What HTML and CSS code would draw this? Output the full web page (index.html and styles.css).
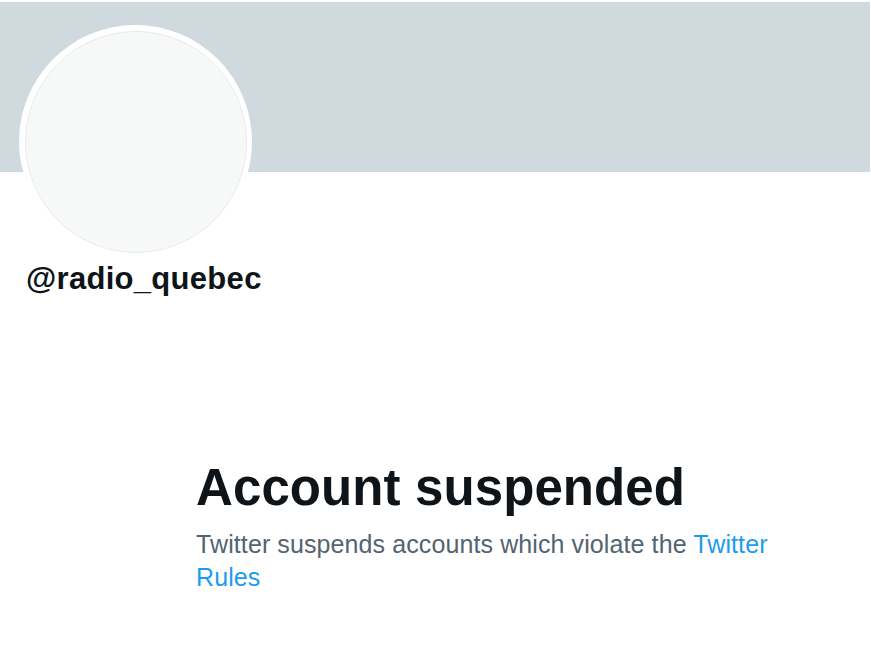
FILE: index.html
```html
<!DOCTYPE html>
<html>
<head>
<meta charset="utf-8">
<link rel="stylesheet" href="styles.css">
</head>
<body>
<div class="page">
  <div class="banner"></div>
  <div class="profile">
    <div class="avatar-ring"><div class="avatar"></div></div>
    <div class="handle">@radio_quebec</div>
  </div>
  <div class="empty">
    <h1 class="title">Account suspended</h1>
    <p class="desc">Twitter suspends accounts which violate the <a class="link" href="#">Twitter Rules</a></p>
  </div>
</div>
</body>
</html>
```
FILE: styles.css
```css
html, body {
  margin: 0;
  padding: 0;
  background: #ffffff;
}
.page {
  width: 871px;
  font-family: "Liberation Sans", Arial, sans-serif;
  color: #0f1419;
}
.banner {
  width: 870px;
  height: 170px;
  margin-top: 2px;
  background: #cfd9de;
}
.profile {
  display: flex;
  flex-direction: column;
  align-items: flex-start;
  padding-left: 19px;
  margin-top: -147px;
}
.avatar-ring {
  width: 233px;
  height: 233px;
  border-radius: 50%;
  background: #ffffff;
  display: flex;
  align-items: center;
  justify-content: center;
}
.avatar {
  width: 220px;
  height: 220px;
  border-radius: 50%;
  background: #f7f9f9;
  border: 1px solid #e9ecec;
}
.handle {
  margin-left: 7px;
  margin-top: 3px;
  font-size: 31px;
  font-weight: 700;
  line-height: 36px;
  color: #0f1419;
  letter-spacing: 0.3px;
}
.empty {
  padding: 162px 0 0 196px;
  width: 600px;
}
.title {
  margin: 0;
  font-size: 51px;
  line-height: 58px;
  font-weight: 700;
  color: #0f1419;
  letter-spacing: 0.1px;
}
.desc {
  margin: 11px 0 0 0;
  font-size: 25px;
  line-height: 33px;
  color: #536471;
  letter-spacing: 0.1px;
}
.link {
  color: #1d9bf0;
  text-decoration: none;
}
```
